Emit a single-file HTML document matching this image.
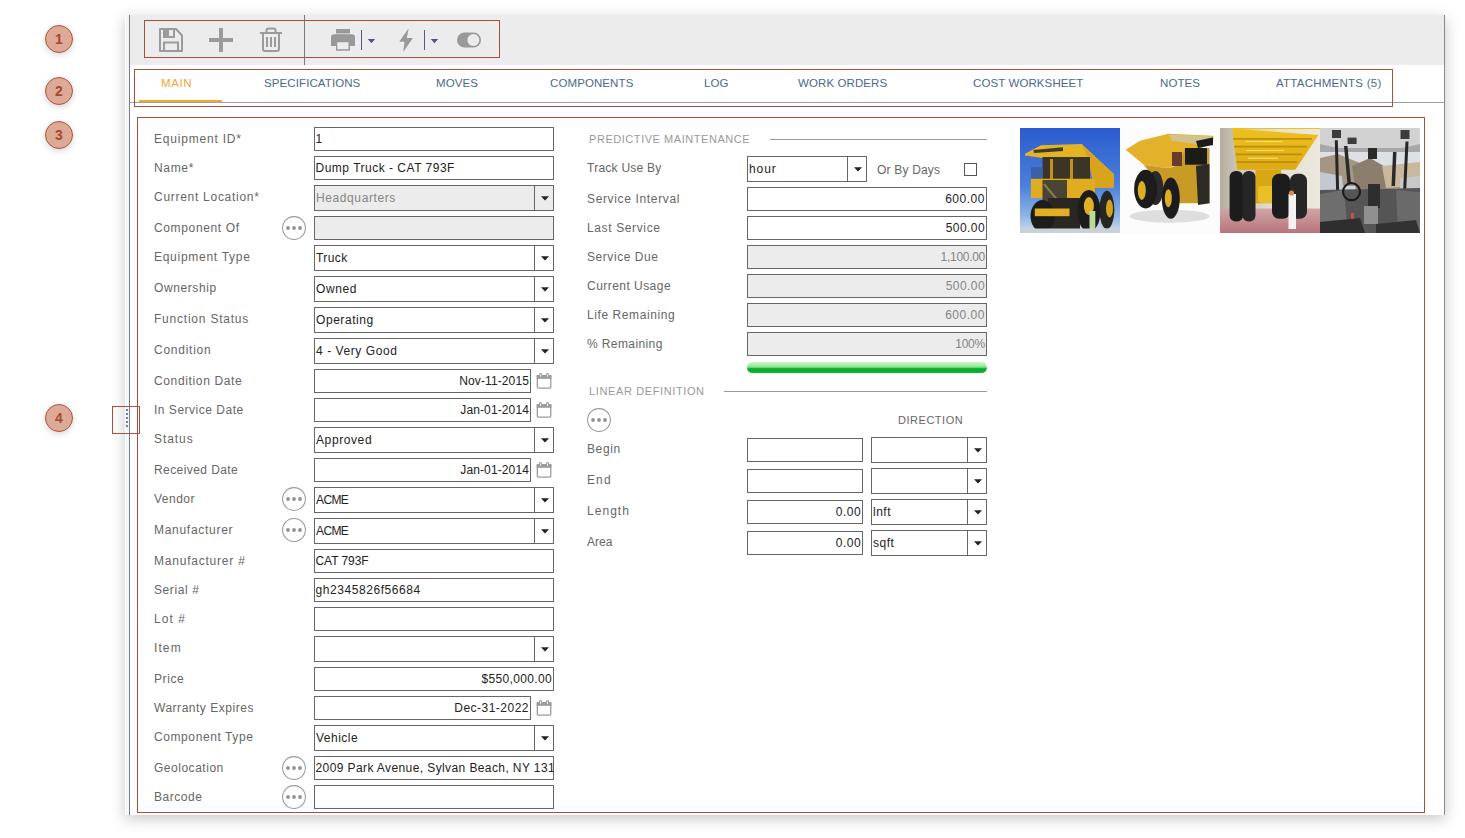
<!DOCTYPE html>
<html><head><meta charset="utf-8"><style>
*{box-sizing:border-box}
html,body{margin:0;padding:0;width:1465px;height:838px;overflow:hidden;background:#fff;font-family:"Liberation Sans",sans-serif}
div,svg,span.a{position:absolute}
.a{position:absolute}
.circ{width:28px;height:28px;border-radius:50%;background:#dcaa97;border:1.5px solid #b0553a;box-shadow:0 2px 6px rgba(0,0,0,.16);color:#a8492e;font-weight:bold;font-size:14px;line-height:27px;text-align:center}
.panel{left:125px;top:15px;width:1320px;height:800px;background:#fff;box-shadow:0 4px 14px rgba(0,0,0,.22)}
.rbox{border:1px solid #a8513a}
.lab{font-size:12px;line-height:16px;color:#666;letter-spacing:.7px;white-space:nowrap}
.inp{border:1px solid #666;background:#fff;font-size:12px;color:#222;padding:0 1px 0 0.5px;white-space:nowrap;overflow:hidden;letter-spacing:.3px}
.inp.r{text-align:right}
.inp.dis{background:#ececec;color:#858585}
.sel .sv{position:absolute;left:1px;top:0}
.sel .sep{right:18px;top:0;bottom:0;width:1px;background:#666}
.sel .tri{right:4px;top:9.5px}
.hdr{font-size:11px;line-height:16px;color:#999;letter-spacing:.45px;white-space:nowrap}
.dirh{font-size:11px;line-height:16px;color:#666;letter-spacing:.3px;white-space:nowrap}
.hl{background:#999}
.chk{border:1px solid #555;background:#fff}
.prog{border-radius:6px;background:linear-gradient(#cdf6cd 0%,#9aeb9c 38%,#84e286 48%,#14b834 56%,#0aa82a 75%,#0bbd30 100%)}
.tab{top:75px;font-size:11.5px;line-height:16px;color:#4a6a8b;letter-spacing:.1px;white-space:nowrap}
</style></head><body>
<div class="circ" style="left:45px;top:25px">1</div>
<div class="circ" style="left:45px;top:77px">2</div>
<div class="circ" style="left:45px;top:121px">3</div>
<div class="circ" style="left:45px;top:404px">4</div>
<div class="panel"></div>
<div style="left:126px;top:15px;width:3px;height:800px;background:#f2f6fa"></div>
<div style="left:129px;top:15px;width:1px;height:800px;background:#7d7d7d"></div>
<div style="left:1444px;top:15px;width:1px;height:800px;background:#8a8a8a"></div>
<div style="left:130px;top:15px;width:1314px;height:50px;background:#ececec"></div>
<div style="left:304px;top:15px;width:1px;height:50px;background:#7a7a7a"></div>
<!-- toolbar icons -->
<svg class="a" style="left:130px;top:15px" width="380" height="50" viewBox="130 15 380 50">
 <g fill="none" stroke="#9b9b9b" stroke-width="2">
  <path d="M160 29h16l6 6.5v15.5h-22z" stroke-linejoin="round"/>
  <rect x="164" y="42.5" width="14" height="8.5"/>
  <rect x="164" y="29" width="10" height="8"/>
 </g>
 <rect x="163.5" y="28" width="5.5" height="10" fill="#9b9b9b"/>
 <rect x="209" y="38" width="24" height="4" fill="#9b9b9b"/>
 <rect x="219" y="28" width="4" height="24" fill="#9b9b9b"/>
 <g fill="none" stroke="#9b9b9b" stroke-width="2">
  <path d="M260 33h22"/>
  <path d="M266.5 33v-2.5a2 2 0 0 1 2 -2h5a2 2 0 0 1 2 2v2.5"/>
  <path d="M263 33v16a2 2 0 0 0 2 2h12a2 2 0 0 0 2 -2v-16"/>
 </g>
 <rect x="266" y="37" width="2" height="10" fill="#9b9b9b"/>
 <rect x="270" y="37" width="2" height="10" fill="#9b9b9b"/>
 <rect x="274" y="37" width="2" height="10" fill="#9b9b9b"/>
 <!-- printer -->
 <rect x="336" y="29" width="14" height="4" fill="#999"/>
 <rect x="336" y="33" width="14" height="1.5" fill="#c6c6c6"/>
 <path d="M331 46V37.5a3.3 3.3 0 0 1 3.3 -3.3H351.7a3.3 3.3 0 0 1 3.3 3.3V46Z" fill="#999"/>
 <rect x="336" y="41.8" width="14" height="8.9" fill="#999"/>
 <rect x="337.3" y="42.2" width="11.2" height="7" fill="#ececec"/>
 <rect x="361" y="30" width="1" height="20" fill="#55598f"/>
 <path d="M367.8 38.9h7.3l-3.65 4.3z" fill="#4d5196"/>
 <!-- bolt -->
 <path d="M408.7 28.2L399.2 41.7H404.6L403.2 51.9L412.9 38.1H406.8Z" fill="#999"/>
 <rect x="424" y="30" width="1" height="20" fill="#55598f"/>
 <path d="M430.8 38.9h7.3l-3.65 4.3z" fill="#4d5196"/>
 <!-- toggle -->
 <rect x="457" y="32.5" width="24" height="15" rx="7.5" fill="#999"/>
 <circle cx="473.4" cy="40" r="6" fill="#ececec"/>
</svg>
<div class="rbox" style="left:144px;top:20px;width:356px;height:38px"></div>
<!-- tabs -->
<div style="left:130px;top:102px;width:1314px;height:1px;background:#9ba1a8"></div>
<div style="left:139px;top:100px;width:83px;height:2px;background:#f5a82b"></div>
<div class="tab" style="left:161px;color:#f3a637;letter-spacing:.6px">MAIN</div>
<div class="tab" style="left:264px">SPECIFICATIONS</div>
<div class="tab" style="left:436px">MOVES</div>
<div class="tab" style="left:550px">COMPONENTS</div>
<div class="tab" style="left:704px">LOG</div>
<div class="tab" style="left:798px">WORK ORDERS</div>
<div class="tab" style="left:973px">COST WORKSHEET</div>
<div class="tab" style="left:1160px">NOTES</div>
<div class="tab" style="left:1276px;letter-spacing:.25px">ATTACHMENTS (5)</div>
<div class="rbox" style="left:134px;top:69px;width:1259px;height:38px"></div>
<!-- content -->
<div class="rbox" style="left:137px;top:117px;width:1288px;height:696px"></div>
<div class="lab" style="left:154px;top:131px;letter-spacing:0.8px">Equipment ID*</div>
<div class="inp" style="left:314px;top:127px;width:240px;height:24px;line-height:22px;letter-spacing:0px">1</div>
<div class="lab" style="left:154px;top:160px;letter-spacing:0.66px">Name*</div>
<div class="inp" style="left:314px;top:156px;width:240px;height:24px;line-height:22px;letter-spacing:0.5px">Dump Truck - CAT 793F</div>
<div class="lab" style="left:154px;top:189px;letter-spacing:0.72px">Current Location*</div>
<div class="inp sel dis" style="left:314px;top:185px;width:240px;height:26px;line-height:24px"><span class="sv" style="letter-spacing:0.6px">Headquarters</span><div class="sep"></div><svg class="tri" width="8" height="5" viewBox="0 0 8 5"><path d="M0 0.2h8l-4 4.3z" fill="#222"/></svg></div>
<div class="lab" style="left:154px;top:220px;letter-spacing:0.64px">Component Of</div>
<svg class="a" style="left:282px;top:216px" width="24" height="24" viewBox="0 0 24 24"><circle cx="12" cy="12" r="11.4" fill="#fff" stroke="#999" stroke-width="1.05"/><circle cx="6" cy="12" r="1.9" fill="#929292"/><circle cx="12" cy="12" r="1.9" fill="#929292"/><circle cx="18" cy="12" r="1.9" fill="#929292"/></svg>
<div class="inp dis" style="left:314px;top:216px;width:240px;height:24px;line-height:22px;letter-spacing:0.45px"></div>
<div class="lab" style="left:154px;top:249px;letter-spacing:0.72px">Equipment Type</div>
<div class="inp sel" style="left:314px;top:245px;width:240px;height:26px;line-height:24px"><span class="sv" style="letter-spacing:0.4px">Truck</span><div class="sep"></div><svg class="tri" width="8" height="5" viewBox="0 0 8 5"><path d="M0 0.2h8l-4 4.3z" fill="#222"/></svg></div>
<div class="lab" style="left:154px;top:280px;letter-spacing:0.6px">Ownership</div>
<div class="inp sel" style="left:314px;top:276px;width:240px;height:26px;line-height:24px"><span class="sv" style="letter-spacing:0.57px">Owned</span><div class="sep"></div><svg class="tri" width="8" height="5" viewBox="0 0 8 5"><path d="M0 0.2h8l-4 4.3z" fill="#222"/></svg></div>
<div class="lab" style="left:154px;top:311px;letter-spacing:0.78px">Function Status</div>
<div class="inp sel" style="left:314px;top:307px;width:240px;height:26px;line-height:24px"><span class="sv" style="letter-spacing:0.56px">Operating</span><div class="sep"></div><svg class="tri" width="8" height="5" viewBox="0 0 8 5"><path d="M0 0.2h8l-4 4.3z" fill="#222"/></svg></div>
<div class="lab" style="left:154px;top:342px;letter-spacing:0.74px">Condition</div>
<div class="inp sel" style="left:314px;top:338px;width:240px;height:26px;line-height:24px"><span class="sv" style="letter-spacing:0.57px">4 - Very Good</span><div class="sep"></div><svg class="tri" width="8" height="5" viewBox="0 0 8 5"><path d="M0 0.2h8l-4 4.3z" fill="#222"/></svg></div>
<div class="lab" style="left:154px;top:373px;letter-spacing:0.64px">Condition Date</div>
<div class="inp r" style="left:314px;top:369px;width:217px;height:24px;line-height:22px;letter-spacing:0.12px">Nov-11-2015</div>
<svg class="a" style="left:536px;top:373px" width="16" height="16" viewBox="0 0 16 16"><rect x="1.35" y="2.6" width="13.4" height="12.55" rx="0.8" fill="#fff" stroke="#9c9c9c" stroke-width="1.3"/><rect x="0.7" y="2" width="14.7" height="3.8" fill="#9c9c9c"/><rect x="3.2" y="0" width="2.8" height="4.6" rx="1.4" fill="#9c9c9c"/><rect x="10.1" y="0" width="2.8" height="4.6" rx="1.4" fill="#9c9c9c"/><rect x="4.1" y="1.2" width="1" height="2.6" rx="0.5" fill="#fff"/><rect x="11" y="1.2" width="1" height="2.6" rx="0.5" fill="#fff"/></svg>
<div class="lab" style="left:154px;top:402px;letter-spacing:0.51px">In Service Date</div>
<div class="inp r" style="left:314px;top:398px;width:217px;height:24px;line-height:22px;letter-spacing:0.12px">Jan-01-2014</div>
<svg class="a" style="left:536px;top:402px" width="16" height="16" viewBox="0 0 16 16"><rect x="1.35" y="2.6" width="13.4" height="12.55" rx="0.8" fill="#fff" stroke="#9c9c9c" stroke-width="1.3"/><rect x="0.7" y="2" width="14.7" height="3.8" fill="#9c9c9c"/><rect x="3.2" y="0" width="2.8" height="4.6" rx="1.4" fill="#9c9c9c"/><rect x="10.1" y="0" width="2.8" height="4.6" rx="1.4" fill="#9c9c9c"/><rect x="4.1" y="1.2" width="1" height="2.6" rx="0.5" fill="#fff"/><rect x="11" y="1.2" width="1" height="2.6" rx="0.5" fill="#fff"/></svg>
<div class="lab" style="left:154px;top:431px;letter-spacing:0.94px">Status</div>
<div class="inp sel" style="left:314px;top:427px;width:240px;height:26px;line-height:24px"><span class="sv" style="letter-spacing:0.6px">Approved</span><div class="sep"></div><svg class="tri" width="8" height="5" viewBox="0 0 8 5"><path d="M0 0.2h8l-4 4.3z" fill="#222"/></svg></div>
<div class="lab" style="left:154px;top:462px;letter-spacing:0.42px">Received Date</div>
<div class="inp r" style="left:314px;top:458px;width:217px;height:24px;line-height:22px;letter-spacing:0.12px">Jan-01-2014</div>
<svg class="a" style="left:536px;top:462px" width="16" height="16" viewBox="0 0 16 16"><rect x="1.35" y="2.6" width="13.4" height="12.55" rx="0.8" fill="#fff" stroke="#9c9c9c" stroke-width="1.3"/><rect x="0.7" y="2" width="14.7" height="3.8" fill="#9c9c9c"/><rect x="3.2" y="0" width="2.8" height="4.6" rx="1.4" fill="#9c9c9c"/><rect x="10.1" y="0" width="2.8" height="4.6" rx="1.4" fill="#9c9c9c"/><rect x="4.1" y="1.2" width="1" height="2.6" rx="0.5" fill="#fff"/><rect x="11" y="1.2" width="1" height="2.6" rx="0.5" fill="#fff"/></svg>
<div class="lab" style="left:154px;top:491px;letter-spacing:0.5px">Vendor</div>
<svg class="a" style="left:282px;top:487px" width="24" height="24" viewBox="0 0 24 24"><circle cx="12" cy="12" r="11.4" fill="#fff" stroke="#999" stroke-width="1.05"/><circle cx="6" cy="12" r="1.9" fill="#929292"/><circle cx="12" cy="12" r="1.9" fill="#929292"/><circle cx="18" cy="12" r="1.9" fill="#929292"/></svg>
<div class="inp sel" style="left:314px;top:487px;width:240px;height:26px;line-height:24px"><span class="sv" style="letter-spacing:-0.6px">ACME</span><div class="sep"></div><svg class="tri" width="8" height="5" viewBox="0 0 8 5"><path d="M0 0.2h8l-4 4.3z" fill="#222"/></svg></div>
<div class="lab" style="left:154px;top:522px;letter-spacing:0.71px">Manufacturer</div>
<svg class="a" style="left:282px;top:518px" width="24" height="24" viewBox="0 0 24 24"><circle cx="12" cy="12" r="11.4" fill="#fff" stroke="#999" stroke-width="1.05"/><circle cx="6" cy="12" r="1.9" fill="#929292"/><circle cx="12" cy="12" r="1.9" fill="#929292"/><circle cx="18" cy="12" r="1.9" fill="#929292"/></svg>
<div class="inp sel" style="left:314px;top:518px;width:240px;height:26px;line-height:24px"><span class="sv" style="letter-spacing:-0.6px">ACME</span><div class="sep"></div><svg class="tri" width="8" height="5" viewBox="0 0 8 5"><path d="M0 0.2h8l-4 4.3z" fill="#222"/></svg></div>
<div class="lab" style="left:154px;top:553px;letter-spacing:0.78px">Manufacturer #</div>
<div class="inp" style="left:314px;top:549px;width:240px;height:24px;line-height:22px;letter-spacing:-0.06px">CAT 793F</div>
<div class="lab" style="left:154px;top:582px;letter-spacing:0.59px">Serial #</div>
<div class="inp" style="left:314px;top:578px;width:240px;height:24px;line-height:22px;letter-spacing:0.57px">gh2345826f56684</div>
<div class="lab" style="left:154px;top:611px;letter-spacing:1.03px">Lot #</div>
<div class="inp" style="left:314px;top:607px;width:240px;height:24px;line-height:22px;letter-spacing:0.45px"></div>
<div class="lab" style="left:154px;top:640px;letter-spacing:1.1px">Item</div>
<div class="inp sel" style="left:314px;top:636px;width:240px;height:26px;line-height:24px"><span class="sv" style="letter-spacing:0.45px"></span><div class="sep"></div><svg class="tri" width="8" height="5" viewBox="0 0 8 5"><path d="M0 0.2h8l-4 4.3z" fill="#222"/></svg></div>
<div class="lab" style="left:154px;top:671px;letter-spacing:0.6px">Price</div>
<div class="inp r" style="left:314px;top:667px;width:240px;height:24px;line-height:22px;letter-spacing:0.35px">$550,000.00</div>
<div class="lab" style="left:154px;top:700px;letter-spacing:0.52px">Warranty Expires</div>
<div class="inp r" style="left:314px;top:696px;width:217px;height:24px;line-height:22px;letter-spacing:0.49px">Dec-31-2022</div>
<svg class="a" style="left:536px;top:700px" width="16" height="16" viewBox="0 0 16 16"><rect x="1.35" y="2.6" width="13.4" height="12.55" rx="0.8" fill="#fff" stroke="#9c9c9c" stroke-width="1.3"/><rect x="0.7" y="2" width="14.7" height="3.8" fill="#9c9c9c"/><rect x="3.2" y="0" width="2.8" height="4.6" rx="1.4" fill="#9c9c9c"/><rect x="10.1" y="0" width="2.8" height="4.6" rx="1.4" fill="#9c9c9c"/><rect x="4.1" y="1.2" width="1" height="2.6" rx="0.5" fill="#fff"/><rect x="11" y="1.2" width="1" height="2.6" rx="0.5" fill="#fff"/></svg>
<div class="lab" style="left:154px;top:729px;letter-spacing:0.59px">Component Type</div>
<div class="inp sel" style="left:314px;top:725px;width:240px;height:26px;line-height:24px"><span class="sv" style="letter-spacing:0.48px">Vehicle</span><div class="sep"></div><svg class="tri" width="8" height="5" viewBox="0 0 8 5"><path d="M0 0.2h8l-4 4.3z" fill="#222"/></svg></div>
<div class="lab" style="left:154px;top:760px;letter-spacing:0.52px">Geolocation</div>
<svg class="a" style="left:282px;top:756px" width="24" height="24" viewBox="0 0 24 24"><circle cx="12" cy="12" r="11.4" fill="#fff" stroke="#999" stroke-width="1.05"/><circle cx="6" cy="12" r="1.9" fill="#929292"/><circle cx="12" cy="12" r="1.9" fill="#929292"/><circle cx="18" cy="12" r="1.9" fill="#929292"/></svg>
<div class="inp" style="left:314px;top:756px;width:240px;height:24px;line-height:22px;letter-spacing:0.4px">2009 Park Avenue, Sylvan Beach, NY 13157</div>
<div class="lab" style="left:154px;top:789px;letter-spacing:0.52px">Barcode</div>
<svg class="a" style="left:282px;top:785px" width="24" height="24" viewBox="0 0 24 24"><circle cx="12" cy="12" r="11.4" fill="#fff" stroke="#999" stroke-width="1.05"/><circle cx="6" cy="12" r="1.9" fill="#929292"/><circle cx="12" cy="12" r="1.9" fill="#929292"/><circle cx="18" cy="12" r="1.9" fill="#929292"/></svg>
<div class="inp" style="left:314px;top:785px;width:240px;height:24px;line-height:22px;letter-spacing:0.45px"></div>

<div class="hdr" style="left:589px;top:131px;letter-spacing:0.55px">PREDICTIVE MAINTENANCE</div>
<div class="hl" style="left:770px;top:139px;width:217px;height:1px;"></div>
<div class="lab" style="left:587px;top:160px;letter-spacing:0.25px">Track Use By</div>
<div class="inp sel" style="left:747px;top:156px;width:120px;height:26px;line-height:24px"><span class="sv" style="letter-spacing:0.9px">hour</span><div class="sep"></div><svg class="tri" width="8" height="5" viewBox="0 0 8 5"><path d="M0 0.2h8l-4 4.3z" fill="#222"/></svg></div>
<div class="lab" style="left:877px;top:161.5px;letter-spacing:0.19px">Or By Days</div>
<div class="chk" style="left:964px;top:163px;width:13px;height:13px;"></div>
<div class="lab" style="left:587px;top:191px;letter-spacing:0.65px">Service Interval</div>
<div class="inp r" style="left:747px;top:187px;width:240px;height:24px;line-height:22px;letter-spacing:0.52px">600.00</div>
<div class="lab" style="left:587px;top:220px;letter-spacing:0.63px">Last Service</div>
<div class="inp r" style="left:747px;top:216px;width:240px;height:24px;line-height:22px;letter-spacing:0.42px">500.00</div>
<div class="lab" style="left:587px;top:249px;letter-spacing:0.56px">Service Due</div>
<div class="inp dis r" style="left:747px;top:245px;width:240px;height:24px;line-height:22px;letter-spacing:-0.29px">1,100.00</div>
<div class="lab" style="left:587px;top:278px;letter-spacing:0.46px">Current Usage</div>
<div class="inp dis r" style="left:747px;top:274px;width:240px;height:24px;line-height:22px;letter-spacing:0.42px">500.00</div>
<div class="lab" style="left:587px;top:307px;letter-spacing:0.58px">Life Remaining</div>
<div class="inp dis r" style="left:747px;top:303px;width:240px;height:24px;line-height:22px;letter-spacing:0.52px">600.00</div>
<div class="lab" style="left:587px;top:336px;letter-spacing:0.4px">% Remaining</div>
<div class="inp dis r" style="left:747px;top:332px;width:240px;height:24px;line-height:22px;letter-spacing:-0.23px">100%</div>
<div class="prog" style="left:747px;top:362px;width:240px;height:11px;"></div>
<div class="hdr" style="left:589px;top:383px;letter-spacing:0.62px">LINEAR DEFINITION</div>
<div class="hl" style="left:724px;top:391px;width:263px;height:1px;"></div>
<svg class="a" style="left:587px;top:408px" width="24" height="24" viewBox="0 0 24 24"><circle cx="12" cy="12" r="11.4" fill="#fff" stroke="#999" stroke-width="1.05"/><circle cx="6" cy="12" r="1.9" fill="#929292"/><circle cx="12" cy="12" r="1.9" fill="#929292"/><circle cx="18" cy="12" r="1.9" fill="#929292"/></svg>
<div class="dirh" style="left:898px;top:412px;letter-spacing:0.53px">DIRECTION</div>
<div class="lab" style="left:587px;top:441px;letter-spacing:0.6px">Begin</div>
<div class="inp r" style="left:747px;top:438px;width:116px;height:24px;line-height:22px;letter-spacing:0.45px"></div>
<div class="inp sel" style="left:871px;top:437px;width:116px;height:26px;line-height:24px"><span class="sv" style="letter-spacing:0.45px"></span><div class="sep"></div><svg class="tri" width="8" height="5" viewBox="0 0 8 5"><path d="M0 0.2h8l-4 4.3z" fill="#222"/></svg></div>
<div class="lab" style="left:587px;top:472px;letter-spacing:1.1px">End</div>
<div class="inp r" style="left:747px;top:469px;width:116px;height:24px;line-height:22px;letter-spacing:0.45px"></div>
<div class="inp sel" style="left:871px;top:468px;width:116px;height:26px;line-height:24px"><span class="sv" style="letter-spacing:0.45px"></span><div class="sep"></div><svg class="tri" width="8" height="5" viewBox="0 0 8 5"><path d="M0 0.2h8l-4 4.3z" fill="#222"/></svg></div>
<div class="lab" style="left:587px;top:503px;letter-spacing:1.04px">Length</div>
<div class="inp r" style="left:747px;top:500px;width:116px;height:24px;line-height:22px;letter-spacing:0.45px">0.00</div>
<div class="inp sel" style="left:871px;top:499px;width:116px;height:26px;line-height:24px"><span class="sv" style="letter-spacing:0.5px">lnft</span><div class="sep"></div><svg class="tri" width="8" height="5" viewBox="0 0 8 5"><path d="M0 0.2h8l-4 4.3z" fill="#222"/></svg></div>
<div class="lab" style="left:587px;top:534px;letter-spacing:0.03px">Area</div>
<div class="inp r" style="left:747px;top:531px;width:116px;height:24px;line-height:22px;letter-spacing:0.45px">0.00</div>
<div class="inp sel" style="left:871px;top:530px;width:116px;height:26px;line-height:24px"><span class="sv" style="letter-spacing:0.5px">sqft</span><div class="sep"></div><svg class="tri" width="8" height="5" viewBox="0 0 8 5"><path d="M0 0.2h8l-4 4.3z" fill="#222"/></svg></div>

<svg class="a" style="left:1020px;top:128px" width="400" height="105" viewBox="0 0 400 105">
<defs>
<linearGradient id="sky1" x1="0" y1="0" x2="0" y2="1"><stop offset="0" stop-color="#2c5bd0"/><stop offset="0.55" stop-color="#4a80da"/><stop offset="0.85" stop-color="#92b8e6"/><stop offset="1" stop-color="#d4dde6"/></linearGradient>
<linearGradient id="wall3" x1="0" y1="0" x2="1" y2="0"><stop offset="0" stop-color="#b3ae9e"/><stop offset="0.2" stop-color="#cfcabb"/><stop offset="0.6" stop-color="#e6e1d5"/><stop offset="1" stop-color="#ece8de"/></linearGradient>
<linearGradient id="floor3" x1="0" y1="0" x2="0" y2="1"><stop offset="0" stop-color="#cfa6a6"/><stop offset="1" stop-color="#b8747a"/></linearGradient>
<linearGradient id="ceil4" x1="0" y1="0" x2="0" y2="1"><stop offset="0" stop-color="#c4c4c4"/><stop offset="1" stop-color="#dedede"/></linearGradient>
<linearGradient id="bed3" x1="0" y1="0" x2="0" y2="1"><stop offset="0" stop-color="#eec21e"/><stop offset="1" stop-color="#dcaa14"/></linearGradient>
<filter id="bl" x="-5%" y="-5%" width="110%" height="110%"><feGaussianBlur stdDeviation="0.6"/></filter>
<clipPath id="c1"><rect x="0" y="0" width="100" height="105"/></clipPath>
<clipPath id="c2"><rect x="100" y="0" width="100" height="105"/></clipPath>
<clipPath id="c3"><rect x="200" y="0" width="100" height="105"/></clipPath>
<clipPath id="c4"><rect x="300" y="0" width="100" height="105"/></clipPath>
</defs>
<!-- image 1 -->
<g clip-path="url(#c1)"><g filter="url(#bl)">
<rect x="0" y="0" width="100" height="105" fill="url(#sky1)"/>
<path d="M5 25.7L21 17.3L61.8 16L94 46.3L93.4 59.9L74 60L70 29L28.9 30.9L5 27.6Z" fill="#e5b421"/>
<path d="M62 17L94 46.3L93.4 59.9L74 60L68 30Z" fill="#d8a41a"/>
<path d="M13.5 22L43 19.3L43 23L14 25Z" fill="#3c3a2c"/>
<rect x="22.5" y="29" width="47.5" height="22" fill="#3a3428"/>
<rect x="30" y="31" width="3" height="20" fill="#c09020"/>
<rect x="50" y="31" width="3" height="20" fill="#c09020"/>
<rect x="10.9" y="39.2" width="11.6" height="12.8" fill="#3a60a8"/>
<path d="M10.9 50.8L75 50.8L75 70L10.9 70Z" fill="#e0ac20"/>
<path d="M22.5 52L47 52L47 85.6L22.5 85.6Z" fill="#4a4432"/>
<path d="M24 56L44 80" stroke="#8a7a50" stroke-width="2"/>
<rect x="28" y="70" width="32" height="33" fill="#2a2824"/>
<ellipse cx="22.5" cy="88" rx="12" ry="16" fill="#1c1c1a"/>
<rect x="14.8" y="80.5" width="34.7" height="7.7" fill="#e2ae22"/>
<ellipse cx="86.9" cy="81.8" rx="7.5" ry="19" fill="#262624"/>
<ellipse cx="89.5" cy="80.5" rx="3.5" ry="9" fill="#d2a21e"/>
<ellipse cx="68.9" cy="83" rx="11.6" ry="21" fill="#1f1f1d"/>
<ellipse cx="68.9" cy="78" rx="5" ry="9" fill="#e0b222"/>
<rect x="69.5" y="83" width="5.8" height="19.4" fill="#b8dc98"/>
<rect x="0" y="100.5" width="100" height="4.5" fill="#c9d0d6"/>
</g></g>
<!-- image 2 -->
<g clip-path="url(#c2)"><g filter="url(#bl)">
<rect x="100" y="0" width="100" height="105" fill="#fcfcfc"/>
<ellipse cx="149.5" cy="88.2" rx="40" ry="6.5" fill="#dedede"/>
<path d="M105.7 21.8L119.9 12.8L148.3 5.7L193.4 7.7L193.4 12.2L176 24L150 40L140.5 39.2L123.8 36.7Z" fill="#e4b22a"/>
<path d="M148.3 6.4L193.4 8.3L176.6 16L152 12.8Z" fill="#d2c28e"/>
<path d="M176 13L193 9.5L193 17L178 20Z" fill="#1e1e1a"/>
<path d="M123.8 36.7L140.5 39.2L150 40L158.6 36.7L165 20L189.5 20L189.5 75.3L158.6 75.3L150 70Z" fill="#c89a28"/>
<rect x="165" y="20" width="22" height="16.7" fill="#1a1a18"/>
<path d="M176 38L189.5 36L189.5 75.3L178 77Z" fill="#2e2c26"/>
<rect x="152" y="24" width="10" height="14" fill="#6a3a2a"/>
<ellipse cx="135.4" cy="59.9" rx="8" ry="17" fill="#2c2c2a"/>
<ellipse cx="125.7" cy="61.1" rx="11.6" ry="19.3" fill="#1f1f1e"/>
<ellipse cx="121.8" cy="62.4" rx="4" ry="9.5" fill="#dcae28"/>
<ellipse cx="150.8" cy="70.2" rx="9" ry="20.6" fill="#1f1f1e"/>
<ellipse cx="148.3" cy="70.2" rx="3.5" ry="9" fill="#dcae28"/>
</g></g>
<!-- image 3 -->
<g clip-path="url(#c3)"><g filter="url(#bl)">
<rect x="200" y="0" width="100" height="105" fill="url(#wall3)"/>
<rect x="200" y="80.5" width="100" height="24.5" fill="url(#floor3)"/>
<path d="M212.2 0.6L298.5 7L275.3 41.8L217.3 41.8Z" fill="url(#bed3)"/>
<rect x="212" y="0" width="88" height="1" fill="#eec21e"/>
<g stroke="#c08c10" stroke-width="1.6">
<path d="M213 10.9L292 10.9"/><path d="M214 18.6L287 18.6"/><path d="M215.5 26.4L282 26.4"/><path d="M216.5 34.1L277 34.1"/>
</g>
<g stroke="#fbe98a" stroke-width="1.2" opacity="0.8">
<path d="M226 13.5L262 13.5"/><path d="M226 22.5L264 22.5"/><path d="M228 30.2L258 30.2"/>
</g>
<rect x="235.4" y="41.8" width="25.7" height="33.5" fill="#d9a618"/>
<rect x="238" y="58" width="20" height="17" rx="4" fill="#eabf26"/>
<rect x="209.6" y="43" width="13.5" height="50.4" rx="6" fill="#1e1e1e"/>
<rect x="222.5" y="43" width="13" height="50.4" rx="6" fill="#282828"/>
<rect x="252" y="45.7" width="18" height="45" rx="7" fill="#1e1e1e"/>
<rect x="270" y="45.7" width="17" height="45" rx="7" fill="#262626"/>
<rect x="268.5" y="66" width="7.5" height="35" fill="#f2f2f2"/>
<circle cx="271.5" cy="65" r="2.6" fill="#d68850"/>
</g></g>
<!-- image 4 -->
<g clip-path="url(#c4)"><g filter="url(#bl)">
<rect x="300" y="0" width="100" height="105" fill="#cfd3d8"/>
<rect x="300" y="0" width="100" height="22" fill="#d2d2d2"/>
<path d="M300 16L318 20L382 20L400 16L400 24L300 24Z" fill="#a8a8a8"/>
<rect x="300" y="24" width="100" height="14" fill="#dde1e6"/>
<path d="M300 30L318 26L352 40L356 58L300 58Z" fill="#a49682"/>
<path d="M332 38L350 30L374 44L380 60L336 62Z" fill="#8c7e6c"/>
<path d="M362 38L400 34L400 58L366 60Z" fill="#c9b89c"/>
<path d="M300 44L322 48L324 72L300 72Z" fill="#c4c8d0"/>
<path d="M380 50L400 48L400 68L380 68Z" fill="#c8c8c8"/>
<rect x="312" y="2" width="9" height="8" fill="#3a3a3a"/>
<rect x="380.5" y="2" width="9" height="9" fill="#3a3a3a"/>
<rect x="327.6" y="9.6" width="9" height="6.4" fill="#3c3c3c"/>
<path d="M314.8 12.2L317.8 12.2L319.3 70L316.3 70Z" fill="#262626"/>
<path d="M324 18L327.5 18L331 56L327.5 56Z" fill="#2a2a2a"/>
<path d="M385.5 13.5L388.5 13.5L385.8 70L382.8 70Z" fill="#262626"/>
<path d="M373 24L376.5 24L375 58L371.5 58Z" fill="#2a2a2a"/>
<rect x="348" y="20" width="9" height="11" fill="#2c2c2c"/>
<path d="M300 62L400 60L400 105L300 105Z" fill="#555"/>
<path d="M300 66L324 62L328 105L300 105Z" fill="#6e6e6e"/>
<path d="M376 62L400 64L400 105L378 105Z" fill="#6a6a6a"/>
<circle cx="331.5" cy="63.7" r="8.5" fill="none" stroke="#1e1e1e" stroke-width="2.2"/>
<rect x="348" y="56" width="12" height="24" fill="#2e2e2e"/>
<rect x="344" y="78" width="14" height="18" fill="#909090"/>
<rect x="331" y="85" width="3" height="6" fill="#d85030"/>
<path d="M300 94L340 90L345 105L300 105Z" fill="#2e2e2e"/>
<path d="M356 96L396 92L400 105L356 105Z" fill="#333"/>
</g></g>
</svg>

<!-- splitter -->
<div style="left:126.2px;top:409.3px;width:1.6px;height:1.6px;background:#5064a8;border-radius:50%"></div>
<div style="left:126.2px;top:413.3px;width:1.6px;height:1.6px;background:#5064a8;border-radius:50%"></div>
<div style="left:126.2px;top:417.3px;width:1.6px;height:1.6px;background:#5064a8;border-radius:50%"></div>
<div style="left:126.2px;top:421.3px;width:1.6px;height:1.6px;background:#5064a8;border-radius:50%"></div>
<div style="left:126.2px;top:425.3px;width:1.6px;height:1.6px;background:#5064a8;border-radius:50%"></div>
<div class="rbox" style="left:112px;top:406px;width:28px;height:28px"></div>
</body></html>
